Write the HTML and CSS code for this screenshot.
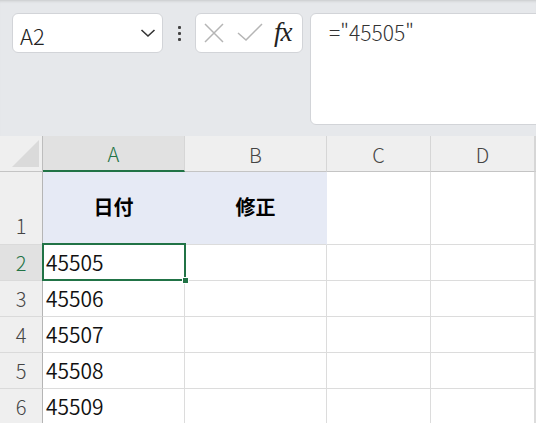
FILE: index.html
```html
<!DOCTYPE html>
<html lang="ja">
<head>
<meta charset="utf-8">
<title>Sheet</title>
<link rel="stylesheet" href="styles.css">
</head>
<body>
<div class="app">
  <div class="toolbar">
    <div class="namebox">
      <span class="namebox-text">A2</span>
      <svg class="chevron" width="16" height="10" viewBox="0 0 16 10"><path d="M1.5 2 L8 8 L14.5 2" fill="none" stroke="#333" stroke-width="1.6"/></svg>
    </div>
    <div class="dots"><span></span><span></span><span></span></div>
    <div class="fbuttons">
      <svg class="icon-x" width="20" height="20" viewBox="0 0 20 20"><path d="M1 1 L19 19 M19 1 L1 19" stroke="#b5b5b5" stroke-width="1.5" fill="none"/></svg>
      <svg class="icon-check" width="26" height="18" viewBox="0 0 26 18"><path d="M1 10 L9 17 L25 1" stroke="#b5b5b5" stroke-width="1.5" fill="none"/></svg>
      <span class="fx">fx</span>
    </div>
    <div class="formula">="45505"</div>
  </div>
  <div class="grid">
    <div class="cell corner"><div class="corner-tri"></div></div>
    <div class="cell colhead selected-col">A</div>
    <div class="cell colhead">B</div>
    <div class="cell colhead">C</div>
    <div class="cell colhead">D</div>
    <div class="cell colhead"></div>

    <div class="cell rowhead rowhead-bottom">1</div>
    <div class="cell title">日付</div>
    <div class="cell title">修正</div>
    <div class="cell"></div>
    <div class="cell"></div>
    <div class="cell"></div>

    <div class="cell rowhead selected-row">2</div>
    <div class="cell data active">45505<div class="selection"><div class="handle"></div></div></div>
    <div class="cell"></div>
    <div class="cell"></div>
    <div class="cell"></div>
    <div class="cell"></div>

    <div class="cell rowhead">3</div>
    <div class="cell data">45506</div>
    <div class="cell"></div>
    <div class="cell"></div>
    <div class="cell"></div>
    <div class="cell"></div>

    <div class="cell rowhead">4</div>
    <div class="cell data">45507</div>
    <div class="cell"></div>
    <div class="cell"></div>
    <div class="cell"></div>
    <div class="cell"></div>

    <div class="cell rowhead">5</div>
    <div class="cell data">45508</div>
    <div class="cell"></div>
    <div class="cell"></div>
    <div class="cell"></div>
    <div class="cell"></div>

    <div class="cell rowhead">6</div>
    <div class="cell data">45509</div>
    <div class="cell"></div>
    <div class="cell"></div>
    <div class="cell"></div>
    <div class="cell"></div>
  </div>
</div>
</body>
</html>
```
FILE: styles.css
```css
* { box-sizing: border-box; }
html, body { margin: 0; padding: 0; }
body {
  width: 536px;
  height: 423px;
  overflow: hidden;
  background: #ffffff;
  font-family: "Noto Sans CJK JP", "Noto Sans", sans-serif;
}
.app { width: 536px; }

.toolbar {
  height: 136px;
  background: #e6e8eb;
  display: flex;
  align-items: flex-start;
  padding: 13px 0 0 12px;
  overflow: hidden;
  box-shadow: inset 0 3px 3px -2px rgba(0,0,0,0.14);
}
.namebox {
  flex: none;
  width: 151px;
  height: 40px;
  background: #fff;
  border: 1px solid #d2d4d8;
  border-radius: 6px;
  display: flex;
  align-items: center;
  justify-content: space-between;
  padding: 3px 6px 0 7px;
}
.namebox-text {
  font-size: 22px;
  font-weight: 300;
  color: #222;
  line-height: 24px;
}
.chevron { margin-top: -3px; }
.dots {
  flex: none;
  width: 3px;
  height: 40px;
  margin: 0 14px 0 15px;
  display: flex;
  flex-direction: column;
  justify-content: center;
  gap: 3px;
}
.dots span {
  display: block;
  width: 3px;
  height: 3px;
  background: #444;
  border-radius: 1px;
}
.fbuttons {
  flex: none;
  width: 108px;
  height: 40px;
  background: #fff;
  border: 1px solid #d2d4d8;
  border-radius: 6px;
  display: flex;
  align-items: center;
  padding-left: 8px;
}
.icon-x { flex: none; }
.icon-check { flex: none; margin-left: 13px; margin-top: -2px; }
.fx {
  margin-left: 11px;
  font-family: "Liberation Serif", "DejaVu Serif", serif;
  font-style: italic;
  font-size: 27px;
  line-height: 24px;
  color: #222;
  letter-spacing: -1px;
  margin-top: -2px;
}
.formula {
  flex: none;
  width: 240px;
  height: 112px;
  margin-left: 7px;
  background: #fff;
  border: 1px solid #d2d4d8;
  border-radius: 6px;
  padding: 6px 0 0 18px;
  font-size: 21px;
  font-weight: 300;
  line-height: 24px;
  color: #333;
}

.grid {
  display: grid;
  grid-template-columns: 43px 142px 142px 104px 104px 1fr;
  grid-template-rows: 36px 73px 36px 36px 36px 36px 36px;
}
.cell {
  border-right: 1px solid #dcdcdc;
  border-bottom: 1px solid #dcdcdc;
  display: flex;
  align-items: center;
  font-size: 21px;
  font-weight: 350;
  color: #111;
  position: relative;
}
.corner {
  background: #efefef;
  border-right-color: #bdbdbd;
  border-bottom-color: #c4c4c4;
  justify-content: flex-end;
  align-items: flex-end;
  padding: 0 3px 4px 0;
}
.corner-tri {
  width: 27px;
  height: 27px;
  background: #dadada;
  clip-path: polygon(100% 0, 100% 100%, 0 100%);
}
.colhead {
  background: #efefef;
  justify-content: center;
  color: #444;
  font-size: 20px;
  font-weight: 300;
  border-right-color: #d6d6d6;
  border-bottom-color: #c4c4c4;
  padding-top: 1px;
}
.selected-col {
  background: #e1e1e1;
  color: #217346;
  border-bottom: 2px solid #217346;
}
.rowhead {
  background: #efefef;
  justify-content: center;
  color: #444;
  font-size: 20px;
  font-weight: 300;
  border-right-color: #b5b5b5;
  border-bottom-color: #dadada;
}
.rowhead-bottom {
  align-items: flex-end;
  padding-bottom: 4px;
}
.selected-row {
  background: #e1e1e1;
  color: #217346;
}
.title {
  background: #e6eaf5;
  border-right-color: #e6eaf5;
  justify-content: center;
  font-weight: bold;
  font-size: 20px;
  color: #000;
  padding-bottom: 4px;
}
.data {
  padding-left: 3px;
  padding-bottom: 1px;
}
.active { z-index: 2; }
.selection {
  position: absolute;
  left: -1px;
  top: -2px;
  right: -2px;
  bottom: -1px;
  border: 2px solid #217346;
}
.handle {
  position: absolute;
  right: -5px;
  bottom: -5px;
  width: 7px;
  height: 7px;
  background: #217346;
  border: 1px solid #fff;
}
```
